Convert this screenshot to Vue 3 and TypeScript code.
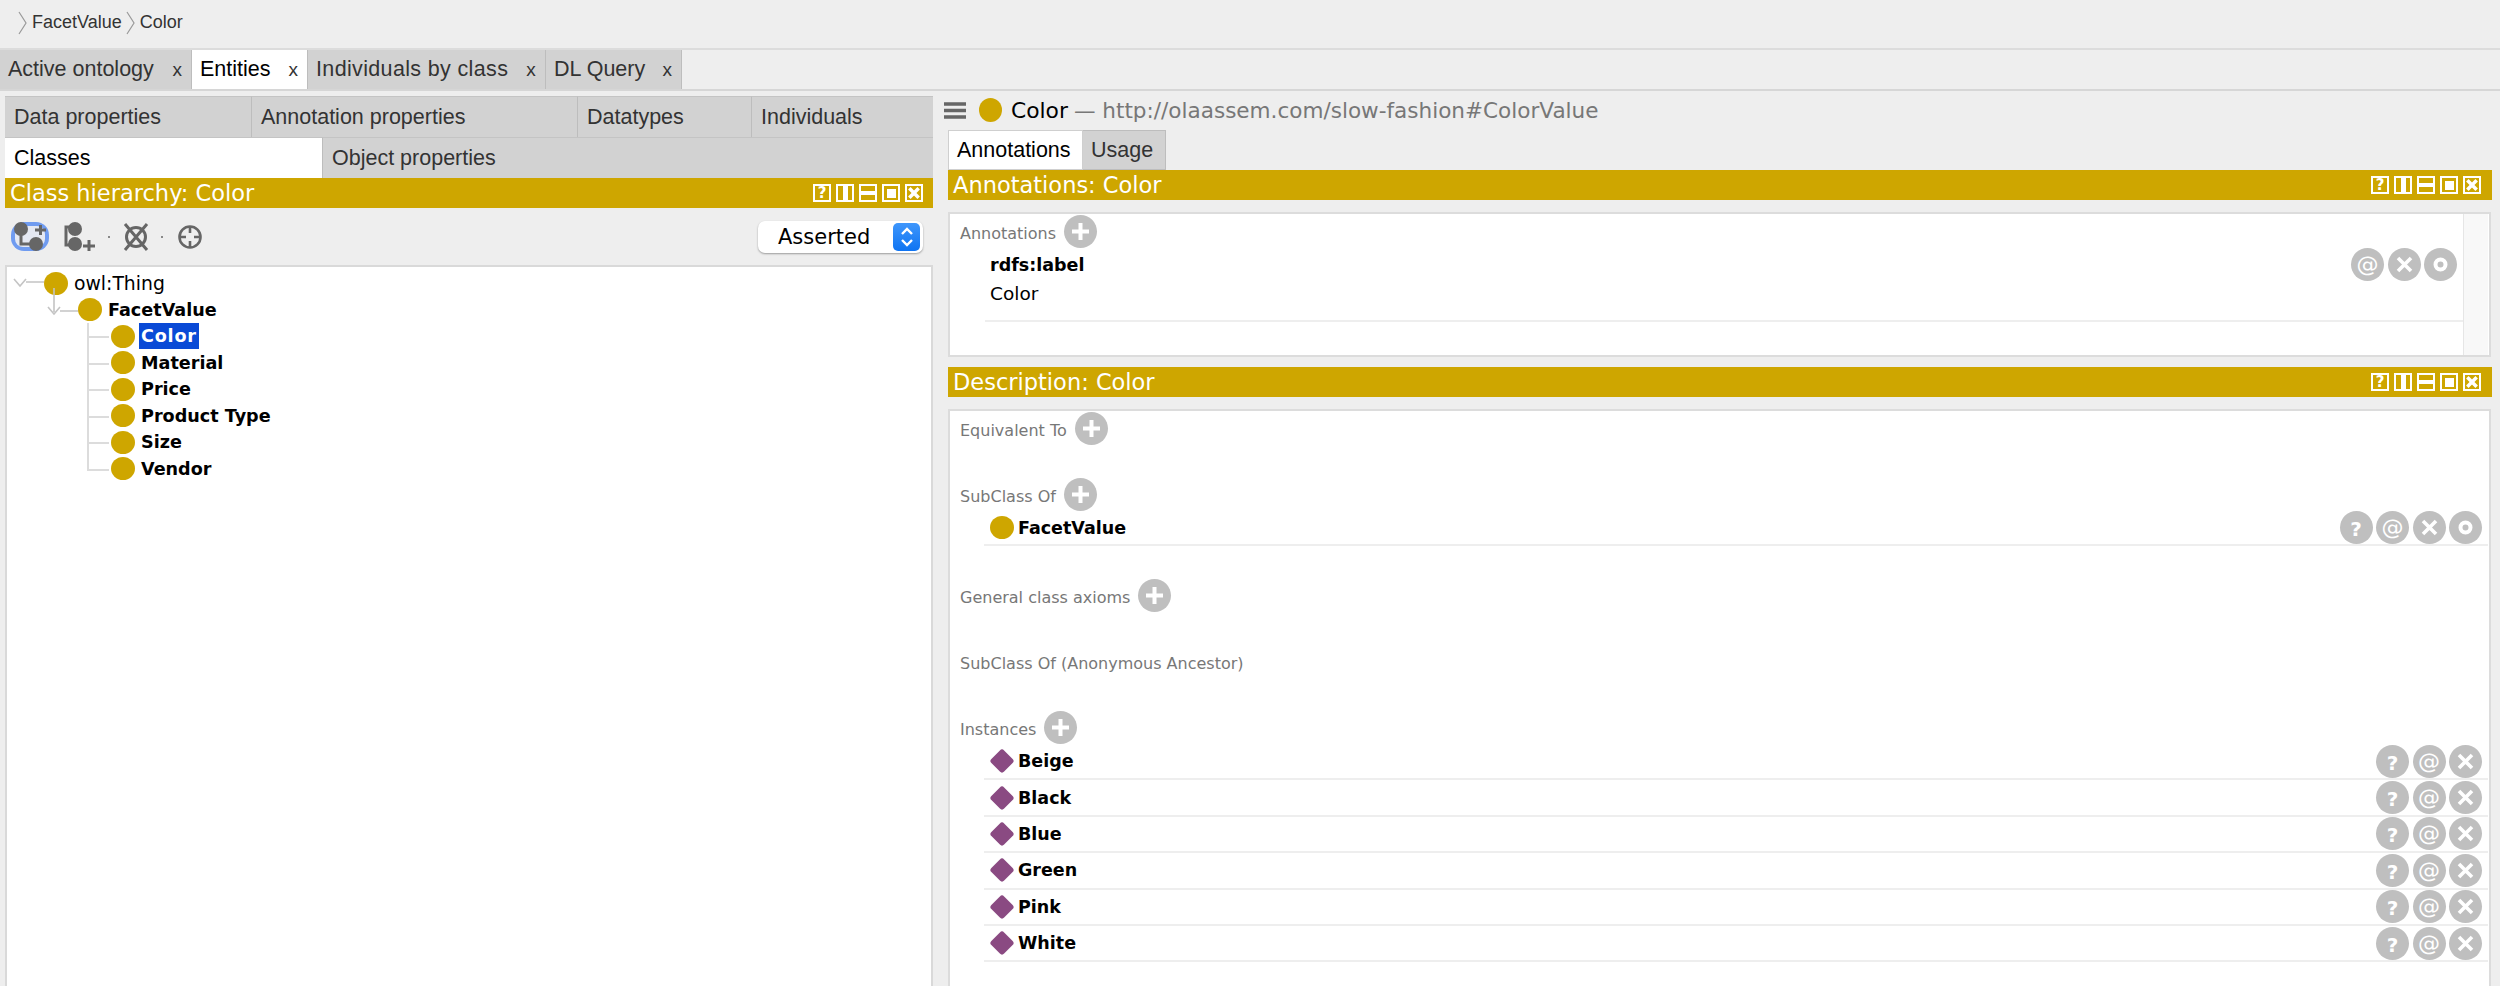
<script setup lang="ts">
const mainTabs = [
  { label: 'Active ontology', cls: 'w-active', on: false },
  { label: 'Entities', cls: 'w-entities', on: true },
  { label: 'Individuals by class', cls: 'w-indiv', on: false },
  { label: 'DL Query', cls: 'w-dl', on: false },
]
const winBtns = ['q', 'col', 'row', 'max', 'x']
const children = ['Color', 'Material', 'Price', 'Product Type', 'Size', 'Vendor']
const instances = ['Beige', 'Black', 'Blue', 'Green', 'Pink', 'White']
</script>

<template>
  <div class="app">
    <div class="crumbs">
      <svg class="chev" viewBox="0 0 9 24"><path d="M1 1l7 11-7 11" /></svg>
      <span>FacetValue</span>
      <svg class="chev" viewBox="0 0 9 24"><path d="M1 1l7 11-7 11" /></svg>
      <span>Color</span>
    </div>
    <div class="maintabs">
      <div v-for="t in mainTabs" :key="t.label" class="mtab" :class="[t.cls, { on: t.on }]">
        <span>{{ t.label }}</span><span class="close">x</span>
      </div>
    </div>
    <div class="split">
      <section class="left">
        <div class="vtabs">
          <div class="vtab w1">Data properties</div>
          <div class="vtab w2">Annotation properties</div>
          <div class="vtab w3">Datatypes</div>
          <div class="vtab w4">Individuals</div>
        </div>
        <div class="vtabs">
          <div class="vtab w5 on">Classes</div>
          <div class="vtab w6">Object properties</div>
        </div>
        <div class="bar">
          <span>Class hierarchy: Color</span>
          <div class="winbtns">
            <span v-for="b in winBtns" :key="b" class="wb">
              <template v-if="b === 'q'">?</template>
              <i v-else-if="b === 'col'" class="wb-col"></i>
              <i v-else-if="b === 'row'" class="wb-row"></i>
              <i v-else-if="b === 'max'" class="wb-max"></i>
              <svg v-else viewBox="0 0 12 12" class="wb-x"><path d="M2 2l8 8M10 2l-8 8" /></svg>
            </span>
          </div>
        </div>
        <div class="toolbar">
          <svg class="ti ti1" viewBox="0 0 38 30">
            <rect x="0" y="0" width="38" height="29" rx="13" fill="#6f9bf0" />
            <rect x="4" y="4" width="30" height="21" rx="8" fill="#e4e8f2" />
            <path d="M10 7v15h15" fill="none" stroke="#666" stroke-width="3" />
            <circle cx="10" cy="7" r="7" fill="#666" />
            <circle cx="25" cy="22" r="7" fill="#666" />
            <path d="M24 8h11M29.500 3v10" stroke="#666" stroke-width="3" />
          </svg>
          <svg class="ti ti2" viewBox="0 0 32 30">
            <path d="M11 5H2v18h9" fill="none" stroke="#666" stroke-width="3" />
            <circle cx="11" cy="7" r="7" fill="#666" />
            <circle cx="11" cy="22" r="7" fill="#666" />
            <path d="M19 24h12M25 18v11" stroke="#666" stroke-width="3" />
          </svg>
          <i class="dot"></i>
          <svg class="ti ti3" viewBox="0 0 26 28">
            <ellipse cx="13" cy="14" rx="9.500" ry="9.500" fill="none" stroke="#666" stroke-width="3" />
            <path d="M2 1l22 26M24 1L2 27" stroke="#666" stroke-width="3" />
          </svg>
          <i class="dot"></i>
          <svg class="ti ti4" viewBox="0 0 24 24">
            <circle cx="12" cy="12" r="10.500" fill="none" stroke="#666" stroke-width="2.600" />
            <path d="M12 2v6M12 16v6M2 12h6M16 12h6" stroke="#666" stroke-width="2.600" />
          </svg>
          <div class="combo">
            <span>Asserted</span>
            <span class="stepper">
              <svg viewBox="0 0 16 24"><path d="M3 9l5-5 5 5M3 15l5 5 5-5" /></svg>
            </span>
          </div>
        </div>
        <div class="tree">
          <div class="node l0">
            <svg class="exp e0" viewBox="0 0 32 12"><path d="M1 2l6 7 6-7M13 5h18" /></svg>
            <i class="owl"></i><span class="nm">owl:Thing</span>
          </div>
          <div class="node l1">
            <svg class="exp e1" viewBox="0 0 32 36"><path d="M7 1v24M1 20l6 7 6-7M13 24h18" /></svg>
            <i class="owl"></i><b class="nm">FacetValue</b>
          </div>
          <div v-for="(c, i) in children" :key="c" class="node l2" :class="{ last: i === children.length - 1 }">
            <i class="owl"></i><b class="nm" :class="{ sel: i === 0 }">{{ c }}</b>
          </div>
        </div>
      </section>

      <section class="right">
        <div class="title">
          <svg class="burger" viewBox="0 0 22 17"><path d="M0 2h22M0 8.500h22M0 15h22" /></svg>
          <i class="owl big"></i>
          <span class="tname">Color</span>
          <span class="turl">— http://olaassem.com/slow-fashion#ColorValue</span>
        </div>
        <div class="rtabs">
          <div class="rtab a on">Annotations</div>
          <div class="rtab u">Usage</div>
        </div>
        <div class="bar rbar">
          <span>Annotations: Color</span>
          <div class="winbtns">
            <span v-for="b in winBtns" :key="b" class="wb">
              <template v-if="b === 'q'">?</template>
              <i v-else-if="b === 'col'" class="wb-col"></i>
              <i v-else-if="b === 'row'" class="wb-row"></i>
              <i v-else-if="b === 'max'" class="wb-max"></i>
              <svg v-else viewBox="0 0 12 12" class="wb-x"><path d="M2 2l8 8M10 2l-8 8" /></svg>
            </span>
          </div>
        </div>
        <div class="annbox">
          <div class="anncontent">
            <div class="head anhead">
              <span>Annotations</span>
              <span class="cb add"><svg viewBox="0 0 33 33"><path d="M16.500 8v17M8 16.500h17" /></svg></span>
            </div>
            <div class="annrow">
              <div class="anntext">
                <b>rdfs:label</b>
                <span>Color</span>
              </div>
              <div class="ctrls annctrls">
                <span class="cb">@</span>
                <span class="cb"><svg viewBox="0 0 33 33"><path class="xm" d="M10 10l13 13M23 10L10 23" /></svg></span>
                <span class="cb"><svg viewBox="0 0 33 33"><circle cx="16.500" cy="16.500" r="5" /></svg></span>
              </div>
            </div>
          </div>
          <div class="scroll"></div>
        </div>
        <div class="bar rbar second">
          <span>Description: Color</span>
          <div class="winbtns">
            <span v-for="b in winBtns" :key="b" class="wb">
              <template v-if="b === 'q'">?</template>
              <i v-else-if="b === 'col'" class="wb-col"></i>
              <i v-else-if="b === 'row'" class="wb-row"></i>
              <i v-else-if="b === 'max'" class="wb-max"></i>
              <svg v-else viewBox="0 0 12 12" class="wb-x"><path d="M2 2l8 8M10 2l-8 8" /></svg>
            </span>
          </div>
        </div>
        <div class="descbox">
          <div class="head sec">
            <span>Equivalent To</span>
            <span class="cb add"><svg viewBox="0 0 33 33"><path d="M16.500 8v17M8 16.500h17" /></svg></span>
          </div>
          <div class="head">
            <span>SubClass Of</span>
            <span class="cb add"><svg viewBox="0 0 33 33"><path d="M16.500 8v17M8 16.500h17" /></svg></span>
          </div>
          <div class="drow single">
            <i class="owl"></i><b>FacetValue</b>
            <div class="ctrls">
              <span class="cb q">?</span>
              <span class="cb">@</span>
              <span class="cb"><svg viewBox="0 0 33 33"><path class="xm" d="M10 10l13 13M23 10L10 23" /></svg></span>
              <span class="cb"><svg viewBox="0 0 33 33"><circle cx="16.500" cy="16.500" r="5" /></svg></span>
            </div>
          </div>
          <div class="head sec">
            <span>General class axioms</span>
            <span class="cb add"><svg viewBox="0 0 33 33"><path d="M16.500 8v17M8 16.500h17" /></svg></span>
          </div>
          <div class="head sec">
            <span>SubClass Of (Anonymous Ancestor)</span>
          </div>
          <div class="head">
            <span>Instances</span>
            <span class="cb add"><svg viewBox="0 0 33 33"><path d="M16.500 8v17M8 16.500h17" /></svg></span>
          </div>
          <div v-for="n in instances" :key="n" class="drow">
            <i class="diamond"></i><b>{{ n }}</b>
            <div class="ctrls">
              <span class="cb q">?</span>
              <span class="cb">@</span>
              <span class="cb"><svg viewBox="0 0 33 33"><path class="xm" d="M10 10l13 13M23 10L10 23" /></svg></span>
            </div>
          </div>
        </div>
      </section>
    </div>
  </div>
</template>

<style>
html, body { margin: 0; background: #eeeeee; overflow: hidden; }
</style>

<style scoped>
.app {
  width: 2500px;
  height: 986px;
  overflow: hidden;
  background: #eeeeee;
  display: flex;
  flex-direction: column;
  font-family: "DejaVu Sans", sans-serif;
  color: #000;
}
.crumbs {
  height: 50px;
  box-sizing: border-box;
  border-bottom: 2px solid #dcdcdc;
  flex: none;
  display: flex;
  align-items: center;
  padding: 0 0 3px 18px;
  gap: 5px;
  font: 18px "Liberation Sans", sans-serif;
  color: #333;
}
.chev { width: 9px; height: 24px; fill: none; stroke: #999; stroke-width: 1.2; }
.crumbs span + .chev { margin-left: -1px; }
.maintabs {
  height: 41px;
  box-sizing: border-box;
  flex: none;
  display: flex;
  border-bottom: 2px solid #d6d6d6;
}
.mtab {
  box-sizing: border-box;
  display: flex;
  justify-content: space-between;
  align-items: center;
  padding: 0 9px 0 8px;
  background: #d2d2d2;
  border-right: 1px solid #bdbdbd;
  font: 21.500px "Liberation Sans", sans-serif;
  color: #333;
}
.mtab.on { background: #fff; color: #000; }
.close { font-size: 19px; color: #333; }
.w-active { width: 192px; }
.w-entities { width: 116px; }
.w-indiv { width: 238px; letter-spacing: .35px; }
.w-dl { width: 136px; }
.split { flex: 1; display: flex; min-height: 0; }
.left {
  width: 928px;
  margin-left: 5px;
  padding-top: 5px;
  display: flex;
  flex-direction: column;
  flex: none;
}
.vtabs { display: flex; height: 41px; flex: none; }
.vtab {
  box-sizing: border-box;
  display: flex;
  align-items: center;
  padding-left: 9px;
  background: #d2d2d2;
  border-right: 1px solid #bdbdbd;
  border-top: 1px solid #c4c4c4;
  font: 21.500px "Liberation Sans", sans-serif;
  color: #333;
}
.vtab.on { background: #fff; color: #000; border-top-color: #c4c4c4; }
.w1 { width: 247px; }
.w2 { width: 326px; }
.w3 { width: 174px; }
.w4 { width: 181px; border-right: 0; }
.w5 { width: 318px; }
.w6 { width: 610px; border-right: 0; }
.bar {
  height: 30px;
  flex: none;
  background: #cea600;
  color: #fff;
  display: flex;
  align-items: center;
  justify-content: space-between;
  padding: 0 10px 0 5px;
  font-size: 22.500px;
}
.winbtns { display: flex; gap: 5px; }
.wb {
  width: 18px;
  height: 18px;
  box-sizing: border-box;
  border: 2px solid #fff;
  display: flex;
  align-items: center;
  justify-content: center;
  font: bold 15px "DejaVu Sans", sans-serif;
  color: #fff;
  line-height: 14px;
}
.wb-col { width: 5px; height: 14px; background: #fff; }
.wb-row { width: 14px; height: 4px; background: #fff; }
.wb-max { width: 9px; height: 9px; background: #fff; }
.wb-x { width: 14px; height: 14px; fill: none; stroke: #fff; stroke-width: 3; }
.toolbar {
  height: 57px;
  flex: none;
  display: flex;
  align-items: center;
  position: relative;
  box-sizing: border-box;
  padding-left: 6px;
}
.ti { flex: none; overflow: visible; }
.ti1 { width: 38px; height: 30px; }
.ti2 { width: 32px; height: 30px; margin-left: 15px; }
.ti3 { width: 26px; height: 28px; margin-left: 13px; }
.ti4 { width: 24px; height: 24px; margin-left: 15px; }
.dot { width: 2px; height: 2px; background: #888; margin-left: 12px; flex: none; }
.combo {
  margin-left: auto;
  margin-right: 10px;
  width: 165px;
  height: 32px;
  box-sizing: border-box;
  background: #fff;
  border-radius: 7px;
  box-shadow: 0 1px 2px rgba(0, 0, 0, .35);
  display: flex;
  align-items: center;
  justify-content: space-between;
  padding: 0 3px 0 20px;
  font-size: 21px;
}
.stepper {
  width: 27px;
  height: 28px;
  border-radius: 5px;
  background: linear-gradient(#3e96fb, #0f74f2);
  display: flex;
  align-items: center;
  justify-content: center;
}
.stepper svg { width: 16px; height: 24px; fill: none; stroke: #fff; stroke-width: 2.400; }
.tree {
  flex: 1;
  background: #fff;
  border: 2px solid #d9d9d9;
  border-bottom: 0;
  padding-top: 3px;
  box-sizing: border-box;
}
.node {
  position: relative;
  height: 26.500px;
  display: flex;
  align-items: center;
  font-size: 17.600px;
}
.owl {
  width: 24px;
  height: 23px;
  border-radius: 50%;
  background: #cea600;
  flex: none;
  display: block;
}
.l0 { padding-left: 37px; }
.l1 { padding-left: 71px; }
.l2 { padding-left: 104px; }
.nm { margin-left: 6px; }
.l0 .nm { font-size: 18.800px; font-weight: 400; }
.sel {
  background: #0a4ad6;
  color: #fff;
  padding: 0 2px;
  margin-left: 4px;
  line-height: 26px;
  height: 26px;
  letter-spacing: .8px;
}
.exp {
  position: absolute;
  fill: none;
  stroke: #c4c4c4;
  stroke-width: 1.600;
}
.e0 { left: 6px; top: 7px; width: 32px; height: 12px; }
.e1 { left: 40px; top: -10px; width: 32px; height: 36px; }
.l2::before {
  content: "";
  position: absolute;
  left: 80px;
  top: 0;
  width: 20px;
  height: 13px;
  border-left: 2px solid #dcdcdc;
  border-bottom: 2px solid #dcdcdc;
}
.l2:not(.last)::after {
  content: "";
  position: absolute;
  left: 80px;
  top: 13px;
  height: 14px;
  border-left: 2px solid #dcdcdc;
}
.right {
  width: 1544px;
  margin-left: 15px;
  flex: none;
  display: flex;
  flex-direction: column;
  margin-top: 1px;
}
.title {
  height: 38px;
  flex: none;
  display: flex;
  align-items: center;
  padding-bottom: 2px;
  box-sizing: border-box;
  font-size: 21.800px;
}
.burger { width: 22px; height: 17px; stroke: #666; stroke-width: 3.400; flex: none; margin-left: -4px; }
.owl.big { margin-left: 13px; width: 23px; height: 24px; }
.tname { margin-left: 9px; }
.turl { margin-left: 6px; color: #777; font-size: 21.550px; }
.rtabs { display: flex; height: 40px; flex: none; }
.rtab {
  box-sizing: border-box;
  display: flex;
  align-items: center;
  padding-left: 8px;
  background: #d2d2d2;
  border: 1px solid #bdbdbd;
  border-left: 0;
  font: 21.500px "Liberation Sans", sans-serif;
  color: #333;
}
.rtab.on { background: #fff; color: #000; border-color: #cfcfcf; border-left: 1px solid #cfcfcf; }
.rtab.a { width: 135px; }
.rtab.u { width: 83px; }
.rbar { padding-left: 5px; padding-right: 11px; }
.second { margin-top: 10px; }
.annbox {
  margin-top: 12px;
  height: 145px;
  flex: none;
  box-sizing: border-box;
  width: 1543px;
  background: #fff;
  border: 2px solid #dcdcdc;
  display: flex;
}
.anncontent { flex: 1; display: flex; flex-direction: column; min-width: 0; }
.scroll {
  width: 24px;
  flex: none;
  background: #f8f8f8;
  border-left: 1px solid #e6e6e6;
  margin-right: 1px;
}
.head {
  height: 33px;
  display: flex;
  align-items: center;
  padding-left: 10px;
  font-size: 16px;
  color: #777;
  flex: none;
}
.head span:first-child { position: relative; top: 2px; }
.head .cb { margin-left: 8px; }
.anhead { margin-top: 1px; }
.sec { margin-bottom: 33px; }
.annrow {
  height: 74px;
  flex: none;
  margin-left: 35px;
  border-bottom: 2px solid #eeeeee;
  display: flex;
  justify-content: space-between;
  box-sizing: border-box;
}
.anntext {
  display: flex;
  flex-direction: column;
  padding: 2px 0 0 5px;
  font-size: 18.500px;
}
.anntext b { font-size: 17.500px; line-height: 30px; }
.anntext span { line-height: 28px; }
.annctrls { margin-right: 6px; align-self: flex-start; }
.cb {
  width: 33px;
  height: 33px;
  border-radius: 50%;
  background: #bfbfbf;
  color: #fff;
  display: inline-flex;
  align-items: center;
  justify-content: center;
  flex: none;
  font: 22px "DejaVu Sans", sans-serif;
}
.cb svg { width: 33px; height: 33px; fill: none; stroke: #fff; stroke-width: 4; }
.cb .xm { stroke-width: 3.600; }
.cb.q { font-weight: 700; font-size: 20px; padding-top: 3px; box-sizing: border-box; }
.ctrls { display: flex; gap: 3.500px; margin-left: auto; }
.descbox {
  margin-top: 12px;
  flex: 1;
  width: 1543px;
  box-sizing: border-box;
  background: #fff;
  border: 2px solid #dcdcdc;
  border-bottom: 0;
  padding-top: 1px;
}
.drow {
  height: 36.400px;
  box-sizing: border-box;
  margin-left: 34px;
  margin-right: 1px;
  border-bottom: 2px solid #eeeeee;
  display: flex;
  align-items: center;
  font-size: 17.500px;
  padding-left: 6px;
}
.drow.single { margin-bottom: 33px; height: 35px; }
.drow b { margin-left: 4px; }
.drow .ctrls { margin-right: 6px; }
.diamond {
  width: 18px;
  height: 18px;
  background: #8a4a82;
  border-radius: 3px;
  transform: rotate(45deg);
  margin: 0 3px;
  flex: none;
  display: block;
}
</style>
